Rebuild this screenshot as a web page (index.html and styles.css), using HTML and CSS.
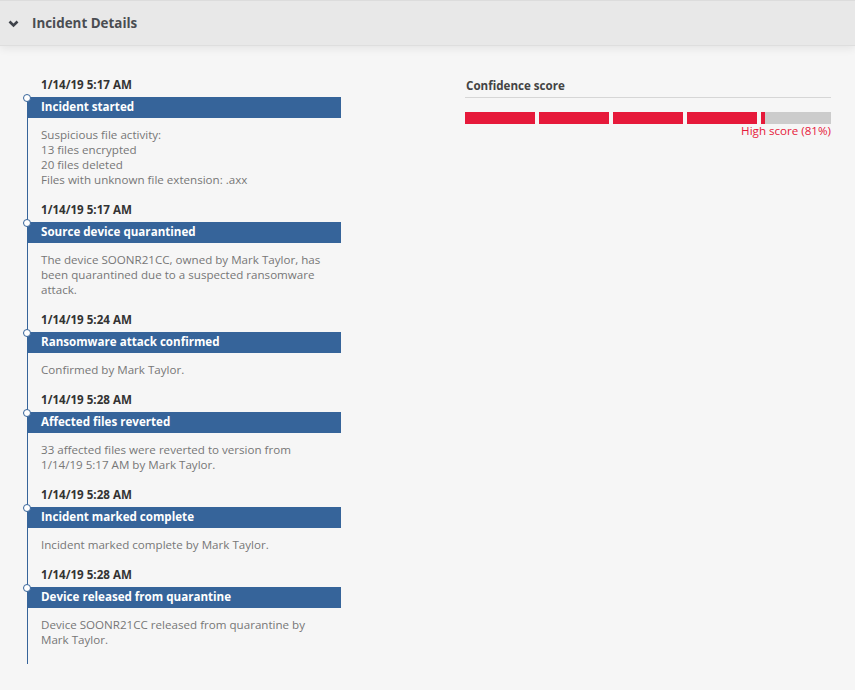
FILE: index.html
```html
<!DOCTYPE html>
<html lang="en">
  <head>
    <meta charset="UTF-8" />
    <meta name="viewport" content="width=device-width, initial-scale=1.0" />
    <title>Incident Details</title>
    <link rel="stylesheet" href="styles.css">
  </head>
  <body>
    <div class="panel-header">
      <svg class="chevron" width="11" height="8" viewBox="0 0 11 8">
        <path d="M1.5 1.5 L5.5 5.5 L9.5 1.5" fill="none" stroke="#3f434a" stroke-width="2.6" />
      </svg>
      <span class="panel-title">Incident Details</span>
    </div>

    <div class="content">
      <div class="timeline">
        <div class="event">
          <div class="event-date">1/14/19 5:17 AM</div>
          <div class="event-title">Incident started</div>
          <div class="event-body">
            Suspicious file activity:<br>
            13 files encrypted<br>
            20 files deleted<br>
            Files with unknown file extension: .axx
          </div>
        </div>
        <div class="event">
          <div class="event-date">1/14/19 5:17 AM</div>
          <div class="event-title">Source device quarantined</div>
          <div class="event-body">
            The device SOONR21CC, owned by Mark Taylor, has been quarantined due to a suspected ransomware attack.
          </div>
        </div>
        <div class="event">
          <div class="event-date">1/14/19 5:24 AM</div>
          <div class="event-title">Ransomware attack confirmed</div>
          <div class="event-body">Confirmed by Mark Taylor.</div>
        </div>
        <div class="event">
          <div class="event-date">1/14/19 5:28 AM</div>
          <div class="event-title">Affected files reverted</div>
          <div class="event-body">
            33 affected files were reverted to version from 1/14/19 5:17 AM by Mark Taylor.
          </div>
        </div>
        <div class="event">
          <div class="event-date">1/14/19 5:28 AM</div>
          <div class="event-title">Incident marked complete</div>
          <div class="event-body">Incident marked complete by Mark Taylor.</div>
        </div>
        <div class="event">
          <div class="event-date">1/14/19 5:28 AM</div>
          <div class="event-title">Device released from quarantine</div>
          <div class="event-body">
            Device SOONR21CC released from quarantine by Mark Taylor.
          </div>
        </div>
      </div>

      <div class="score">
        <div class="score-title">Confidence score</div>
        <div class="score-bar">
          <div class="seg"><div class="fill" style="width: 100%"></div></div>
          <div class="seg"><div class="fill" style="width: 100%"></div></div>
          <div class="seg"><div class="fill" style="width: 100%"></div></div>
          <div class="seg"><div class="fill" style="width: 100%"></div></div>
          <div class="seg"><div class="fill" style="width: 5%"></div></div>
        </div>
        <div class="score-label">High score (81%)</div>
      </div>
    </div>
  </body>
</html>
```

FILE: styles.css
```css
body {
  margin: 0;
  background: #f6f6f6;
  font-family: "Open Sans", "Liberation Sans", sans-serif;
  color: #333;
}
.panel-header {
  display: flex;
  align-items: center;
  height: 44px;
  border-top: 1px solid #dcdcdc;
  border-bottom: 1px solid #dedede;
  background: #e8e8e8;
  box-shadow: 0 3px 8px rgba(0, 0, 0, 0.07);
  padding-left: 8px;
}
.chevron {
  margin-right: 13px;
  margin-top: 1px;
}
.panel-title {
  font-size: 13.4px;
  font-weight: bold;
  color: #4a4d52;
}
.content {
  display: flex;
  justify-content: space-between;
  padding: 31px 24px 0 27px;
}
.timeline {
  position: relative;
  width: 314px;
  padding-bottom: 17px;
}
.timeline::before {
  content: "";
  position: absolute;
  left: 0;
  top: 20px;
  bottom: 0;
  border-left: 1px solid #36649a;
}
.event {
  position: relative;
  margin-bottom: 15px;
}
.event:last-child {
  margin-bottom: 0;
}
.event-date {
  font-size: 11.6px;
  font-weight: bold;
  line-height: 16px;
  padding-left: 14px;
  margin-bottom: 4px;
}
.event-title {
  position: relative;
  margin-left: 1px;
  background: #36649a;
  color: #fff;
  font-size: 11.6px;
  font-weight: bold;
  line-height: 16px;
  padding: 2px 13px 3px;
}
.event-title::before {
  content: "";
  position: absolute;
  left: -5px;
  top: -3px;
  width: 6px;
  height: 6px;
  border: 1.3px solid #36649a;
  border-radius: 50%;
  background: #fff;
}
.event-body {
  font-size: 11.6px;
  line-height: 15px;
  color: #777;
  padding: 9px 11px 0 14px;
}
.score {
  width: 366px;
  padding-top: 1px;
}
.score-title {
  font-size: 11.6px;
  font-weight: bold;
  line-height: 16px;
  color: #444;
  padding: 0 1px 3px;
  border-bottom: 1px solid #d6d6d6;
}
.score-bar {
  display: flex;
  gap: 4px;
  margin-top: 14px;
}
.seg {
  flex: 1;
  height: 12px;
  background: #cccccc;
}
.fill {
  height: 100%;
  background: #e6193a;
}
.score-label {
  text-align: right;
  font-size: 11.6px;
  line-height: 14px;
  color: #e6193a;
}
```
